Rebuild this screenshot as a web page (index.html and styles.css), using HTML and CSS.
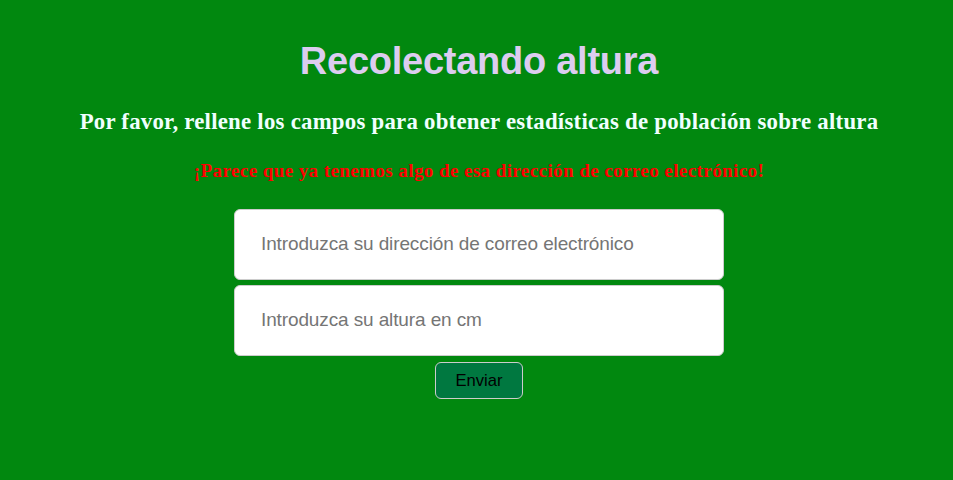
FILE: index.html
```html
<!DOCTYPE html>
<html lang="es">
<head>
<meta charset="utf-8">
<title>Recolectando altura</title>
<link rel="stylesheet" href="styles.css">
</head>
<body>
<main class="container">
<h1>Recolectando altura</h1>
<h3>Por favor, rellene los campos para obtener estadísticas de población sobre altura</h3>
<p class="message">¡Parece que ya tenemos algo de esa dirección de correo electrónico!</p>
<form class="form">
<input type="email" placeholder="Introduzca su dirección de correo electrónico">
<input type="number" placeholder="Introduzca su altura en cm">
<button type="button">Enviar</button>
</form>
</main>
</body>
</html>
```
FILE: styles.css
```css
html, body {
  height: 100%;
  margin: 0;
}
body {
  background: #01880f;
  font-family: "Liberation Serif", "Times New Roman", serif;
  text-align: center;
  overflow: hidden;
}
.container {
  padding: 39px 0 0 5px;
}
h1 {
  margin: 0;
  font: bold 38px/44px "Liberation Sans", Arial, sans-serif;
  letter-spacing: -0.26px;
  color: #dccdf0;
}
h3 {
  margin: 26px 0 0;
  font-size: 22.8px;
  line-height: 26px;
  letter-spacing: 0.245px;
  color: #f0ffff;
}
.message {
  margin: 25px 0 0;
  font-size: 19px;
  font-weight: bold;
  line-height: 22px;
  letter-spacing: 0.42px;
  color: #f00;
}
.form {
  display: flex;
  flex-direction: column;
  align-items: center;
  margin-top: 27px;
}
input {
  box-sizing: border-box;
  width: 490px;
  height: 71px;
  margin: 0 0 5px;
  padding: 0 26px 2px;
  border: 1px solid #ccc;
  border-radius: 6px;
  background: #fff;
  font: 19px "Liberation Sans", Arial, sans-serif;
  letter-spacing: -0.12px;
}
input::placeholder {
  color: #757575;
}
button {
  box-sizing: border-box;
  width: 88px;
  height: 37px;
  margin-top: 1px;
  padding: 0;
  border: 1px solid #ccc;
  border-radius: 6px;
  background: #007840;
  color: #000;
  font: 16.6px "Liberation Sans", Arial, sans-serif;
}
```
